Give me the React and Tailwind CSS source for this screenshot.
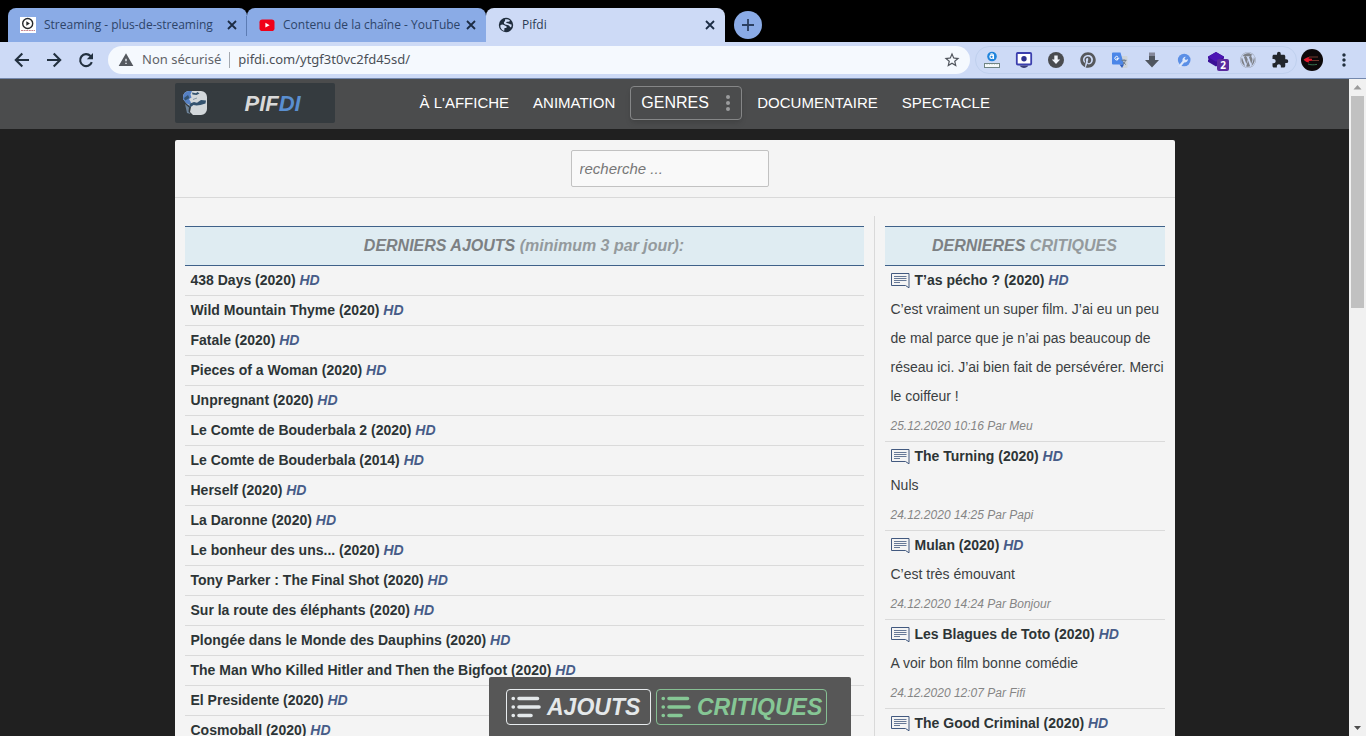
import React from "react";
import { MdStarBorder, MdWarning, MdExtension, MdMoreVert } from "react-icons/md";
import { FaWordpress, FaPinterest } from "react-icons/fa";

const films = [
  "438 Days (2020)",
  "Wild Mountain Thyme (2020)",
  "Fatale (2020)",
  "Pieces of a Woman (2020)",
  "Unpregnant (2020)",
  "Le Comte de Bouderbala 2 (2020)",
  "Le Comte de Bouderbala (2014)",
  "Herself (2020)",
  "La Daronne (2020)",
  "Le bonheur des uns... (2020)",
  "Tony Parker : The Final Shot (2020)",
  "Sur la route des éléphants (2020)",
  "Plongée dans le Monde des Dauphins (2020)",
  "The Man Who Killed Hitler and Then the Bigfoot (2020)",
  "El Presidente (2020)",
  "Cosmoball (2020)",
];

const reviews = [
  {
    title: "T’as pécho ? (2020)",
    text: "C’est vraiment un super film. J’ai eu un peu de mal parce que je n’ai pas beaucoup de réseau ici. J’ai bien fait de persévérer. Merci le coiffeur !",
    meta: "25.12.2020 10:16 Par Meu",
  },
  { title: "The Turning (2020)", text: "Nuls", meta: "24.12.2020 14:25 Par Papi" },
  { title: "Mulan (2020)", text: "C’est très émouvant", meta: "24.12.2020 14:24 Par Bonjour" },
  { title: "Les Blagues de Toto (2020)", text: "A voir bon film bonne comédie", meta: "24.12.2020 12:07 Par Fifi" },
  { title: "The Good Criminal (2020)" },
];

function CloseIcon() {
  return (
    <svg viewBox="0 0 14 14" className="size-3.5" fill="none" stroke="currentColor" strokeWidth="1.800">
      <path d="M3 3l8 8M11 3l-8 8" />
    </svg>
  );
}

function PlusIcon() {
  return (
    <svg viewBox="0 0 14 14" className="size-3.5" fill="none" stroke="currentColor" strokeWidth="1.800">
      <path d="M7 1v12M1 7h12" />
    </svg>
  );
}

function BackIcon() {
  return (
    <svg viewBox="0 0 20 20" className="size-5" fill="none" stroke="currentColor" strokeWidth="2.100">
      <path d="M17 10H4M10.300 3.500L3.800 10l6.500 6.500" />
    </svg>
  );
}

function ForwardIcon() {
  return (
    <svg viewBox="0 0 20 20" className="size-5" fill="none" stroke="currentColor" strokeWidth="2.100">
      <path d="M3 10h13M9.700 3.500l6.500 6.500-6.500 6.500" />
    </svg>
  );
}

function ReloadIcon() {
  return (
    <svg viewBox="0 0 20 20" className="size-5" fill="none" stroke="currentColor" strokeWidth="2.100">
      <path d="M15.800 12.200A6 6 0 1 1 14.500 6L16 7.500" />
      <path d="M17 3v6.200h-6.200z" fill="currentColor" stroke="none" />
    </svg>
  );
}

function PlayFavicon() {
  return (
    <svg viewBox="0 0 16 16" className="size-4 shrink-0">
      <rect width="16" height="16" fill="#fff" />
      <circle cx="7.7" cy="6.5" r="5" fill="none" stroke="#26292c" strokeWidth="1.4" />
      <path d="M6.3 4.2v4.6l3.6-2.3z" fill="#26292c" />
      <path d="M1 13.5h14" stroke="#c98790" strokeWidth="1" strokeDasharray="2 .6" />
    </svg>
  );
}

function YoutubeFavicon() {
  return (
    <svg viewBox="0 0 16 16" className="size-4 shrink-0">
      <rect x=".5" y="2.5" width="15" height="11.5" rx="2.8" fill="#f00018" />
      <path d="M6.4 5.8v4.8l4.2-2.4z" fill="#fff" />
    </svg>
  );
}

function GlobeFavicon() {
  return (
    <svg viewBox="0 0 16 16" className="size-4 shrink-0">
      <circle cx="8" cy="8" r="7.2" fill="#1f2d3d" />
      <path
        d="M2.3 8.4C3.5 7.4 5 7.4 6 8.1c1 .8 2 .9 2.6 1.5.6.8-.3 1.5-1.4 1.5-.8 0-1 .8-.8 1.7.2.6-.2 1-.8.9C3.600 12.800 2.200 10.800 2.300 8.400zM7.200 2.300c1.800-.3 3.600.2 4.900 1.500-.5.9-1.500 1.100-2.500.9-1.200-.2-1.700.4-1.200 1.100.6.7 1.900.4 2.900 1 .8.6 1.600.7 2.300.6.100 1-.1 2-.5 2.800-.9.200-1.300-.7-1.900-1.500-.8-.9-2.700-.7-4.100-1.300C5.700 6.700 5.400 5.400 6.600 4.500c.8-.6.200-1.600.6-2.200z"
        fill="#cfdcf6"
      />
    </svg>
  );
}

function Tab({ icon, title, active, divider }) {
  return (
    <div
      className={
        "relative flex h-[34px] w-[239px] items-center rounded-t-lg pr-2 pl-3 " +
        (active ? "bg-[#cddaf6] text-[#2b3a52]" : "bg-[#8aabe6] text-[#2d4469]")
      }
    >
      {icon}
      <a href="#tab" className="ml-2 w-0 flex-1 overflow-hidden text-xs whitespace-nowrap">
        {title}
      </a>
      <button type="button" aria-label={"Fermer " + title} className="ml-1 text-[#1c2c44]">
        <CloseIcon />
      </button>
      {divider && <span className="absolute top-2 right-0 h-5 w-px bg-[#5c7cb4]" />}
    </div>
  );
}

function AlexaIcon() {
  return (
    <svg viewBox="0 0 18 18" className="size-[18px]">
      <circle cx="9" cy="5.500" r="4.800" fill="#1f84dc" />
      <circle cx="8.600" cy="5.800" r="1.700" fill="none" stroke="#fff" strokeWidth="1.200" />
      <path d="M7.300 3.300c1.700-.8 3.200-.3 3.200 1.200v3.400" fill="none" stroke="#fff" strokeWidth="1.100" />
      <rect x="1.500" y="12.500" width="15" height="4" fill="#f6fafb" stroke="#6f8484" />
      <path d="M4 13v1M6.500 13v1M9 13v1M11.500 13v1M14 13v1" stroke="#cdd6d2" />
    </svg>
  );
}

function MonitorIcon() {
  return (
    <svg viewBox="0 0 18 18" className="size-[18px]">
      <rect x="1.800" y="2" width="14.400" height="11.500" rx="1" fill="#fff" stroke="#3b3fae" strokeWidth="1.800" />
      <circle cx="9" cy="7.700" r="2.700" fill="#2d318f" />
      <path d="M4.500 14.500h9c-1 1.600-2.700 2.500-4.500 2.500s-3.500-.9-4.500-2.500z" fill="#3a3c78" />
    </svg>
  );
}

function DownloadCircleIcon() {
  return (
    <svg viewBox="0 0 18 18" className="size-[18px]">
      <circle cx="9" cy="9" r="8" fill="#4a4c50" />
      <path d="M7.300 4.500h3.400v4h2.500L9 13 4.800 8.500h2.500z" fill="#f1f4fa" />
    </svg>
  );
}

function TranslateIcon() {
  return (
    <svg viewBox="0 0 18 18" className="size-[18px]">
      <path d="M7 5h8.500a1 1 0 0 1 1 1v10a1 1 0 0 1-1 1H11z" fill="#cdd3da" />
      <path d="M2 1.500h7.500L13 13.500H2a1 1 0 0 1-1-1v-10a1 1 0 0 1 1-1z" fill="#4b86e8" />
      <path d="M8.300 7.200H6v1h1.200A1.800 1.800 0 1 1 6.800 5.800" fill="none" stroke="#fff" strokeWidth="1" />
      <path d="M10.500 9.300h5M13 8.300v1M11.500 13.500c1.700-1 2.600-2.300 2.900-4.200M12 10.500c.6 1.300 1.600 2.400 2.800 3" fill="none" stroke="#6b7886" />
      <path d="M8.500 13.500H13L11 17z" fill="#2f5fc0" />
    </svg>
  );
}

function DownArrowIcon() {
  return (
    <svg viewBox="0 0 18 18" className="size-[18px]">
      <path d="M6 1.500h6V6H6z" fill="#85889a" />
      <path d="M6 5h6v4h4l-7 7.500L2 9h4z" fill="#50565f" />
    </svg>
  );
}

function WrenchIcon() {
  return (
    <svg viewBox="0 0 18 18" className="size-[18px]">
      <circle cx="9.200" cy="9" r="6.300" fill="#5b8fe6" />
      <path d="M3 15.500l4.500-5.600c-.5-2.200 1-4.200 3.300-4.200L9.500 7.700l1.400 1.400 2.100-1.100c0 2.300-1.700 3.800-3.800 3.500L5.500 16z" fill="#dbe6fa" />
    </svg>
  );
}

function LayersIcon() {
  return (
    <span className="relative flex">
      <svg viewBox="0 0 18 18" className="size-[18px]">
        <path d="M9 1l8 4.500v2L16 8l1 .7v2L9 15.500 1 10.700v-2L2 8l-1-.5v-2z" fill="#3a0f96" />
        <path d="M9 1l8 5-8 4.800L1 6z" fill="#4c16b4" />
      </svg>
      <span className="absolute top-2 left-2.5 flex size-3 items-center justify-center rounded-xs bg-[#5a2a9e] text-[10px] font-bold text-white">
        2
      </span>
    </span>
  );
}

function AvatarIcon() {
  return (
    <svg viewBox="0 0 22 22" className="size-[22px]">
      <circle cx="11" cy="11" r="11" fill="#0c0809" />
      <path d="M2.500 10.800c1.500-1.500 3.500-2.500 6-2.800L7.500 9.500l3.500.3v1.900l-3.500.2 1 1.700c-2.500-.2-4.500-1.300-6-2.800z" fill="#e0182c" />
      <path d="M8 8h9M11 11.500h7" stroke="#8a4a3a" strokeWidth=".8" />
      <path d="M7 15c2 1 6 1 9 .4" stroke="#3f8a5e" strokeWidth=".8" fill="none" />
    </svg>
  );
}

const extensions = [
  ["Alexa", <AlexaIcon />],
  ["Capture", <MonitorIcon />],
  ["Téléchargements", <DownloadCircleIcon />],
  ["Pinterest", <FaPinterest className="size-4 text-[#56585c]" />],
  ["Traduction", <TranslateIcon />],
  ["Télécharger", <DownArrowIcon />],
  ["Outils", <WrenchIcon />],
  ["Calques", <LayersIcon />],
  ["WordPress", <FaWordpress className="size-4 text-[#7d8087]" />],
  ["Extensions", <MdExtension className="size-[18px] text-[#22262c]" />],
];

function Browser() {
  return (
    <header className="shrink-0">
      <div className="flex bg-black px-2 pt-2 font-['Open_Sans','Noto_Sans',sans-serif]">
        <Tab icon={<PlayFavicon />} title="Streaming - plus-de-streaming" divider />
        <Tab icon={<YoutubeFavicon />} title="Contenu de la chaîne - YouTube" />
        <Tab icon={<GlobeFavicon />} title="Pifdi" active />
        <button
          type="button"
          aria-label="Nouvel onglet"
          className="mt-[3px] ml-[9px] flex size-7 items-center justify-center rounded-full bg-[#8aabe6] text-[#2b3f60]"
        >
          <PlusIcon />
        </button>
      </div>
      <div className="flex h-[37px] items-center border-b border-[#7488ac] bg-[#cddaf6] px-3 font-['Noto_Sans',sans-serif] text-[#22303f]">
        <div className="flex gap-3">
          <button type="button" aria-label="Précédent"><BackIcon /></button>
          <button type="button" aria-label="Suivant"><ForwardIcon /></button>
          <button type="button" aria-label="Actualiser"><ReloadIcon /></button>
        </div>
        <div className="ml-3 flex h-7 flex-1 items-center rounded-full bg-[#f5f9fe] pr-[9px] pl-2.5 text-[13px]">
          <MdWarning className="size-4 shrink-0 text-[#55595f]" />
          <span className="ml-2 text-[#5f6368]">Non sécurisé</span>
          <span className="mx-2 h-4 w-px bg-[#a4a9b0]" />
          <input
            aria-label="Adresse"
            defaultValue="pifdi.com/ytgf3t0vc2fd45sd/"
            className="w-0 flex-1 bg-transparent text-[#4b5057] outline-none"
          />
          <button type="button" aria-label="Favori"><MdStarBorder className="size-[18px] text-[#4f545c]" /></button>
        </div>
        <div className="ml-[5px] flex h-7 items-center rounded-full border border-[#bfd0ee]">
          {extensions.map(([name, icon]) => (
            <button key={name} type="button" aria-label={name} className="flex w-8 items-center justify-center">
              {icon}
            </button>
          ))}
        </div>
        <button type="button" aria-label="Profil" className="ml-1"><AvatarIcon /></button>
        <button type="button" aria-label="Menu" className="ml-[11px]"><MdMoreVert className="size-5" /></button>
      </div>
    </header>
  );
}

function LogoMark() {
  return (
    <svg viewBox="0 0 24 24" className="size-6">
      <path d="M6 0h12a6 6 0 0 1 6 6v12a6 6 0 0 1-6 6h-8l-3-3 1-5-4-3-4-5V6a6 6 0 0 1 6-6z" fill="#d3d8db" />
      <path d="M0 8V6a6 6 0 0 1 6-6h3L7.500 3.500l1 3L6 8l2 3.500L6.500 14 3 12z" fill="#5580c4" />
      <path d="M1 7l4-3 1.500 3L4 8.500 2 9.500zM9 1.500l4 .8 1.500-1.300 2 1.500-3 1.500-4-.5zM7 12.500l4-1.500 3 .8 4-2.800 5 .5-.5 3-5 1.500-4 .5-3-.5-2 1.500-2.500 1z" fill="#34536f" />
      <path d="M2 13l4 3.500-.5 4L7.500 23l-3.500-1z" fill="#6c8298" />
      <path d="M10 8.500l4-1.500" stroke="#8899a8" />
    </svg>
  );
}

function SiteNav() {
  const link = "px-3 text-white";
  return (
    <nav className="h-[50px] bg-[#4b4c4d]">
      <div className="mx-auto flex h-12 max-w-[1000px] items-center">
        <a href="#accueil" className="flex h-10 w-40 items-center rounded-xs bg-[#353b3f] pl-2">
          <LogoMark />
          <span className="ml-[38px] text-[22px] font-bold text-[#d9d9d9] italic">
            PIF<span className="text-[#5a8fd0]">DI</span>
          </span>
        </a>
        <div className="ml-[73px] flex items-center text-[15px] whitespace-nowrap">
          <a href="#affiche" className={link}>À L'AFFICHE</a>
          <a href="#animation" className={link}>ANIMATION</a>
          <button
            type="button"
            className="mx-[3px] flex h-[34px] w-28 items-center justify-between rounded-sm border border-[#858687] pr-2.5 pl-2.5 text-base text-white shadow-md"
          >
            GENRES
            <svg viewBox="0 0 6 18" className="h-[18px] w-1.5" fill="#9b9c9d">
              <circle cx="3" cy="3" r="2" />
              <circle cx="3" cy="9" r="2" />
              <circle cx="3" cy="15" r="2" />
            </svg>
          </button>
          <a href="#documentaire" className={link}>DOCUMENTAIRE</a>
          <a href="#spectacle" className={link}>SPECTACLE</a>
        </div>
      </div>
    </nav>
  );
}

function ReviewIcon() {
  return (
    <svg viewBox="0 0 20 16" className="mr-1 h-4 w-5 shrink-0" fill="none" stroke="#42597f">
      <path d="M.5 .5h17.500v14.300l-3.500-2.300H.5z" />
      <path d="M3 3.500h12.500M3 5.500h12.500M3 7.500h12.500M3 9.500h6" strokeWidth=".8" />
    </svg>
  );
}

function Heading({ first, rest }) {
  return (
    <h2 className="flex h-10 items-center justify-center border-y border-[#3f6189] bg-[#dfecf2] text-base font-bold text-[#7c8083] italic">
      <span>
        {first} <span className="text-[#949a9d]">{rest}</span>
      </span>
    </h2>
  );
}

function Title({ children }) {
  return (
    <a href="#film" className="font-bold text-[#2d3436]">
      {children} <em className="text-[#475c88]">HD</em>
    </a>
  );
}

function ListIcon() {
  return (
    <svg viewBox="0 0 30 24" className="h-6 w-[30px] shrink-0" fill="none" stroke="currentColor" strokeWidth="3.600" strokeLinecap="round">
      <path d="M8 3.500h18.500M8 12h20M8 20.500h12" />
      <path d="M2.200 3.500h.1M2.200 12h.1M2.200 20.500h.1" />
    </svg>
  );
}

function BottomBar() {
  const button = "flex h-9 items-center gap-1.5 rounded-sm border pl-1 text-[23px] font-bold italic";
  return (
    <div className="absolute inset-x-0 bottom-0 flex justify-center pr-[9px]">
      <div className="flex gap-[5px] rounded-t-xs bg-[#575757] pt-3 pr-6 pb-[11px] pl-[17px]">
        <button type="button" className={button + " w-[145px] border-[#e8ecee] text-[#e4e8ea]"}>
          <ListIcon /> AJOUTS
        </button>
        <button type="button" className={button + " w-[171px] border-[#86bf93] text-[#86c795]"}>
          <ListIcon /> CRITIQUES
        </button>
      </div>
    </div>
  );
}

function Scrollbar() {
  return (
    <div className="flex w-[17px] shrink-0 flex-col items-center bg-[#f1f1f1]">
      <svg viewBox="0 0 17 17" className="size-[17px]" fill="#9b9b9b"><path d="M8.500 6l4 4.500h-8z" /></svg>
      <div className="h-[212px] w-[13px] bg-[#c1c1c1]" />
      <svg viewBox="0 0 17 17" className="mt-auto size-[17px]" fill="#4d4d4d"><path d="M8.500 11L5 7h7z" /></svg>
    </div>
  );
}

export default function App() {
  return (
    <div className="flex h-screen flex-col overflow-hidden bg-[#202020]">
      <Browser />
      <div className="flex min-h-0 flex-1 font-['Liberation_Sans',Arial,sans-serif]">
        <div className="relative min-w-0 flex-1 overflow-hidden">
          <SiteNav />
          <main className="mx-auto mt-[11px] max-w-[1000px] rounded-t-xs bg-[#f4f4f4] text-sm text-[#3b3f42]">
            <form className="flex justify-center border-b border-[#d9d9d9] pt-2.5 pr-2.5 pb-2.5">
              <input
                aria-label="Recherche"
                placeholder="recherche ..."
                className="h-[37px] w-[198px] rounded-xs border border-[#c2c2c2] bg-[#f9f9f9] px-2 text-[15px] italic placeholder:text-[#777777]"
              />
            </form>
            <div className="flex pt-[18px]">
              <section className="min-w-0 flex-1 px-2.5 pt-2.5">
                <Heading first="DERNIERS AJOUTS" rest="(minimum 3 par jour):" />
                <ul>
                  {films.map((film) => (
                    <li key={film} className="h-[30px] border-b border-[#dadada] pl-1.5 leading-[29px]">
                      <Title>{film}</Title>
                    </li>
                  ))}
                </ul>
              </section>
              <section className="w-[301px] shrink-0 border-l border-[#d9d9d9] px-2.5 pt-2.5">
                <Heading first="DERNIERES" rest="CRITIQUES" />
                {reviews.map((review) => (
                  <article key={review.title} className="border-b border-[#dadada] pl-1.5 leading-[29px]">
                    <h3 className="flex items-center">
                      <ReviewIcon />
                      <Title>{review.title}</Title>
                    </h3>
                    <p>{review.text}</p>
                    <p className="text-xs leading-[30px] text-[#858585] italic">{review.meta}</p>
                  </article>
                ))}
              </section>
            </div>
          </main>
          <BottomBar />
        </div>
        <Scrollbar />
      </div>
    </div>
  );
}
